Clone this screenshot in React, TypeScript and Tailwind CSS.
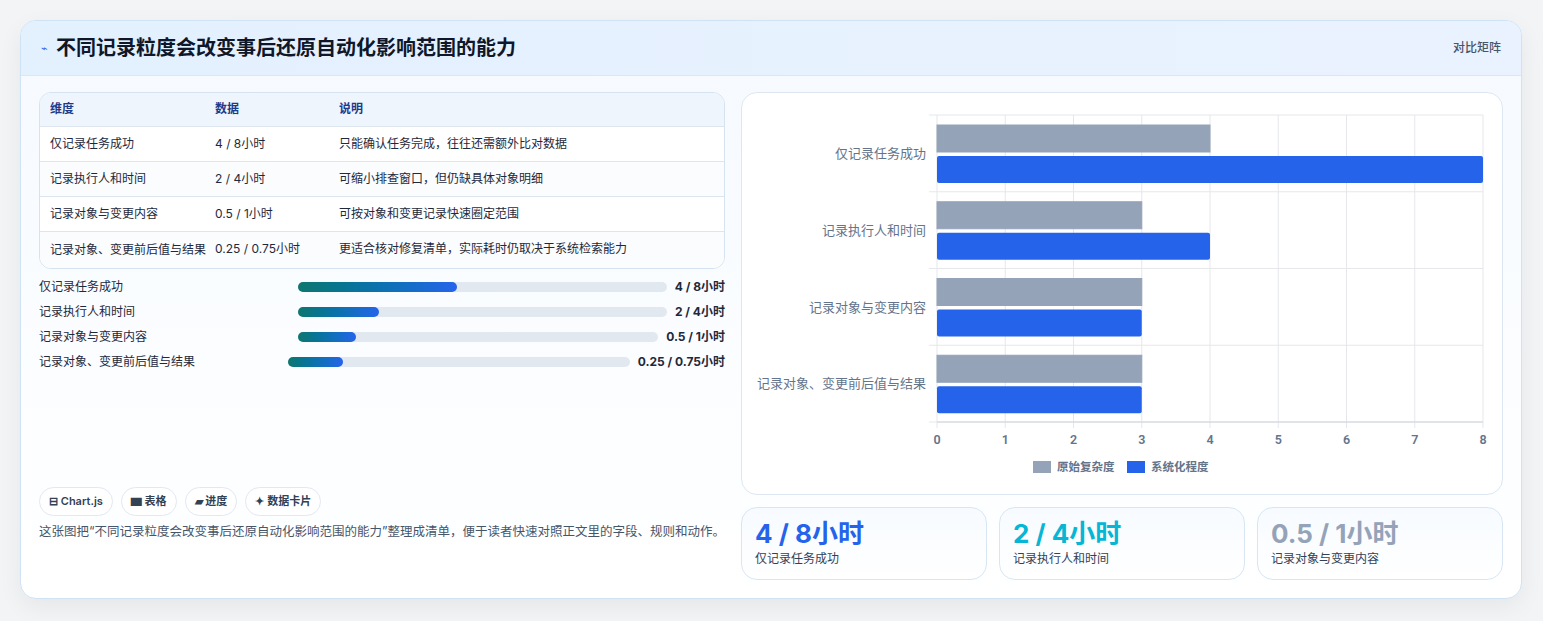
import React from "react";

const rows = [
  ["仅记录任务成功", "4 / 8小时", "只能确认任务完成，往往还需额外比对数据", 4, 8],
  ["记录执行人和时间", "2 / 4小时", "可缩小排查窗口，但仍缺具体对象明细", 3, 4],
  ["记录对象与变更内容", "0.5 / 1小时", "可按对象和变更记录快速圈定范围", 3, 3],
  ["记录对象、变更前后值与结果", "0.25 / 0.75小时", "更适合核对修复清单，实际耗时仍取决于系统检索能力", 3, 3],
] as const;

const prog = [
  { l: "仅记录任务成功", v: "4 / 8小时", p: 43, lw: "w-[259px]" },
  { l: "记录执行人和时间", v: "2 / 4小时", p: 22, lw: "w-[259px]" },
  { l: "记录对象与变更内容", v: "0.5 / 1小时", p: 16, lw: "w-[259px]" },
  { l: "记录对象、变更前后值与结果", v: "0.25 / 0.75小时", p: 16, lw: "w-[249px]" },
];

function Chart() {
  const x0 = 195, unit = 68.25, top = 22, band = 76.75;
  return (
    <svg width="760" height="402" className="block" style={{ fontFamily: "Roboto, 'Noto Sans CJK SC', sans-serif" }}>
      {Array.from({ length: 9 }).map((_, i) => (
        <g key={i}>
          <line x1={x0 + i * unit} x2={x0 + i * unit} y1={top} y2={335} stroke="#e5e7eb" />
          <text x={x0 + i * unit} y={351} textAnchor="middle" fontSize="12.5" fontWeight="600" fill="#64748b">{i}</text>
        </g>
      ))}
      {[0, 1, 2, 3, 4].map((i) => (
        <line key={i} x1={x0 - 8} x2={741} y1={top + i * band} y2={top + i * band} stroke="#e5e7eb" />
      ))}
      <line x1={x0} x2={741} y1={329} y2={329} stroke="#cbd5e1" />
      {rows.map((r, i) => {
        const y = top + i * band;
        return (
          <g key={i}>
            <rect x={x0} y={y + 10} width={(r[3] as number) * unit} height={27} fill="#94a3b8" stroke="#94a3b8" />
            <rect x={x0} y={y + 41} width={(r[4] as number) * unit} height={27} fill="#2563eb" rx={2} />
            <text x={184} y={y + 43} textAnchor="end" fontSize="13" fill="#64748b">{r[0]}</text>
          </g>
        );
      })}
      <rect x={291} y={368} width={18} height={12} fill="#94a3b8" />
      <text x={315} y={378} fontSize="11.5" fontWeight="600" fill="#64748b">原始复杂度</text>
      <rect x={385} y={368} width={18} height={12} fill="#2563eb" />
      <text x={409} y={378} fontSize="11.5" fontWeight="600" fill="#64748b">系统化程度</text>
    </svg>
  );
}

export default function App() {
  return (
    <div className="w-[1543px] h-[621px] bg-[#f3f4f6] pt-5 pl-5" style={{ fontFamily: "Inter, 'Noto Sans CJK SC', sans-serif" }}>
      <div className="w-[1502px] h-[579px] rounded-2xl border border-[#cfe3f5] bg-gradient-to-b from-[#f5faff] to-white overflow-hidden shadow-[0_8px_24px_rgba(0,0,0,0.06)]">
        <div className="h-[55px] flex items-center justify-between px-5 bg-gradient-to-r from-[#e3f0fe] to-[#eaf2ff] border-b border-[#d8e8f8]">
          <div className="flex items-center gap-2">
            <span className="text-[#2563eb] text-[11px]">⌁</span>
            <span className="text-[20px] font-bold text-[#0f172a]">不同记录粒度会改变事后还原自动化影响范围的能力</span>
          </div>
          <span className="text-[12px] text-[#475569] font-medium">对比矩阵</span>
        </div>
        <div className="flex gap-4 px-[18px] pt-[16px]">
          <div className="w-[689px] flex flex-col">
            <div className="rounded-xl border border-[#d5e2ef] bg-white overflow-hidden">
              <table className="w-full text-[12px] text-[#1e293b] border-collapse">
                <thead>
                  <tr className="bg-[#eef5fd] text-[#1e3a8a] h-[33px] text-left">
                    <th className="font-semibold pl-[10px] w-[175px]">维度</th>
                    <th className="font-semibold w-[124px]">数据</th>
                    <th className="font-semibold">说明</th>
                  </tr>
                </thead>
                <tbody>
                  {rows.map((r, i) => (
                    <tr key={i} className={`border-t border-[#dde6ef] align-top ${i % 2 ? "bg-[#fafcfe]" : "bg-white"}`}>
                      <td className={`pl-[10px] pr-2 py-[9px] ${i === 3 ? "leading-[18px]" : "leading-[16px]"}`}>{r[0]}</td>
                      <td className="py-[9px] leading-[16px] pr-2">{r[1]}</td>
                      <td className="py-[9px] leading-[16px]">{r[2]}</td>
                    </tr>
                  ))}
                </tbody>
              </table>
            </div>
            <div className="flex flex-col gap-[10px] mt-[11px]">
              {prog.map((p, i) => (
                <div key={i} className="flex items-center h-[15px] text-[12px]">
                  <span className={`${p.lw} text-[#1e293b] shrink-0`}>{p.l}</span>
                  <div className="flex-1 h-[10px] rounded-full bg-[#e2e8f0] mr-2">
                    <div className="h-full rounded-full bg-gradient-to-r from-[#0f766e] to-[#2563eb]" style={{ width: `${p.p}%` }} />
                  </div>
                  <span className="font-bold text-[#1e293b] whitespace-nowrap">{p.v}</span>
                </div>
              ))}
            </div>
            <div className="flex gap-2 mt-[117px]">
              {["⊟ Chart.js", "▆ 表格", "▰ 进度", "✦ 数据卡片"].map((c) => (
                <span key={c} className="h-[29px] px-[9px] flex items-center rounded-full border border-[#e2e8f0] bg-white text-[11px] font-semibold text-[#334155]">{c}</span>
              ))}
            </div>
            <p className="mt-[6px] text-[12.5px] leading-[20px] text-[#475569]">这张图把“不同记录粒度会改变事后还原自动化影响范围的能力”整理成清单，便于读者快速对照正文里的字段、规则和动作。</p>
          </div>
          <div className="flex-1 flex flex-col gap-3">
            <div className="h-[403px] rounded-2xl border border-[#dde7f1] bg-white overflow-hidden">
              <Chart />
            </div>
            <div className="grid grid-cols-3 gap-3">
              {[["4 / 8小时", "text-[#2563eb]", "仅记录任务成功"], ["2 / 4小时", "text-[#06b6d4]", "记录执行人和时间"], ["0.5 / 1小时", "text-[#94a3b8]", "记录对象与变更内容"]].map((s) => (
                <div key={s[0]} className="h-[73px] rounded-2xl border border-[#d8e6f4] bg-gradient-to-b from-[#f7fbff] to-white px-[13px] pt-[9px]">
                  <div className={`text-[26px] font-bold leading-[34px] ${s[1]}`}>{s[0]}</div>
                  <div className="text-[12px] text-[#334155] leading-[16px]">{s[2]}</div>
                </div>
              ))}
            </div>
          </div>
        </div>
      </div>
    </div>
  );
}
